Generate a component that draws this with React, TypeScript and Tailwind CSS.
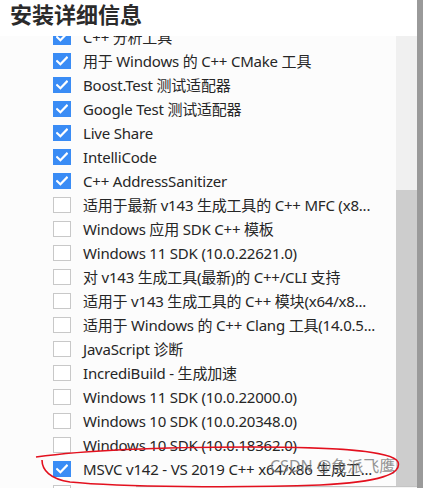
import React from "react";

const items: { label: string; checked: boolean }[] = [
  { label: "C++ 分析工具", checked: true },
  { label: "用于 Windows 的 C++ CMake 工具", checked: true },
  { label: "Boost.Test 测试适配器", checked: true },
  { label: "Google Test 测试适配器", checked: true },
  { label: "Live Share", checked: true },
  { label: "IntelliCode", checked: true },
  { label: "C++ AddressSanitizer", checked: true },
  { label: "适用于最新 v143 生成工具的 C++ MFC (x8...", checked: false },
  { label: "Windows 应用 SDK C++ 模板", checked: false },
  { label: "Windows 11 SDK (10.0.22621.0)", checked: false },
  { label: "对 v143 生成工具(最新)的 C++/CLI 支持", checked: false },
  { label: "适用于 v143 生成工具的 C++ 模块(x64/x8...", checked: false },
  { label: "适用于 Windows 的 C++ Clang 工具(14.0.5...", checked: false },
  { label: "JavaScript 诊断", checked: false },
  { label: "IncrediBuild - 生成加速", checked: false },
  { label: "Windows 11 SDK (10.0.22000.0)", checked: false },
  { label: "Windows 10 SDK (10.0.20348.0)", checked: false },
  { label: "Windows 10 SDK (10.0.18362.0)", checked: false },
  { label: "MSVC v142 - VS 2019 C++ x64/x86 生成工...", checked: true },
  { label: "", checked: false },
];

function Box({ checked }: { checked: boolean }) {
  if (checked) {
    return (
      <div className="w-[18px] h-[16px] bg-[#3a8cf5] flex items-center justify-center shrink-0">
        <svg width="12" height="10" viewBox="0 0 12 10">
          <path d="M1.2 5.2 L4.4 8.2 L10.8 1.6" fill="none" stroke="#fff" strokeWidth="2.2" strokeLinecap="square" />
        </svg>
      </div>
    );
  }
  return <div className="w-[18px] h-[16px] border border-[#c8c8c8] bg-white shrink-0" />;
}

export default function App() {
  return (
    <div
      className="relative w-[423px] h-[488px] overflow-hidden bg-[#fcfcfc] flex"
      style={{ fontFamily: '"Noto Sans", "Noto Sans CJK SC", sans-serif' }}
    >
      <div className="flex-1 flex flex-col">
        <div className="h-[36px] pl-[10px] pt-[0px] flex items-start bg-white">
          <span
            className="text-[22px] leading-[26px] font-bold text-[#2b2b2b]"
            style={{ fontFamily: '"Noto Sans CJK SC", sans-serif' }}
          >
            安装详细信息
          </span>
        </div>
        <div className="flex-1 flex overflow-hidden">
          <div className="flex-1 overflow-hidden">
            <div className="mt-[-11px] flex flex-col">
              {items.map((it, i) => (
                <div key={i} className="h-[24px] flex items-center pl-[53px]">
                  <Box checked={it.checked} />
                  <span className="ml-[12px] text-[15px] leading-[20px] text-[#262626] whitespace-nowrap tracking-[-0.2px]">
                    {it.label}
                  </span>
                </div>
              ))}
            </div>
          </div>
          <div className="w-[21px] bg-[#f0f0f0] flex justify-center">
            <div className="w-[11px] mt-[154px] flex-1 bg-[#cdcdcd]" />
          </div>
        </div>
      </div>
      <div className="w-[6px] bg-[#9a9a9a]" />

      <div className="absolute left-[136px] right-[6px] top-[486px] h-[2px] border-t border-[#c4c4c4] bg-[#f4f4f4]" />

      <div className="absolute left-[270px] top-[455px] text-[16px] leading-[22px] text-[#7a7a7a] opacity-80 whitespace-nowrap">
        CSDN @鱼派飞鹰
      </div>

      <svg className="absolute left-0 top-0 pointer-events-none" width="423" height="488">
        <path
          d="M36 457 C 80 451, 160 447, 250 447 C 330 447, 392 450, 398 462 C 402 474, 380 482, 320 485 C 240 488, 120 487, 70 482 C 50 479, 42 470, 42 460"
          fill="none"
          stroke="#e3101e"
          strokeWidth="1.6"
        />
      </svg>
    </div>
  );
}
